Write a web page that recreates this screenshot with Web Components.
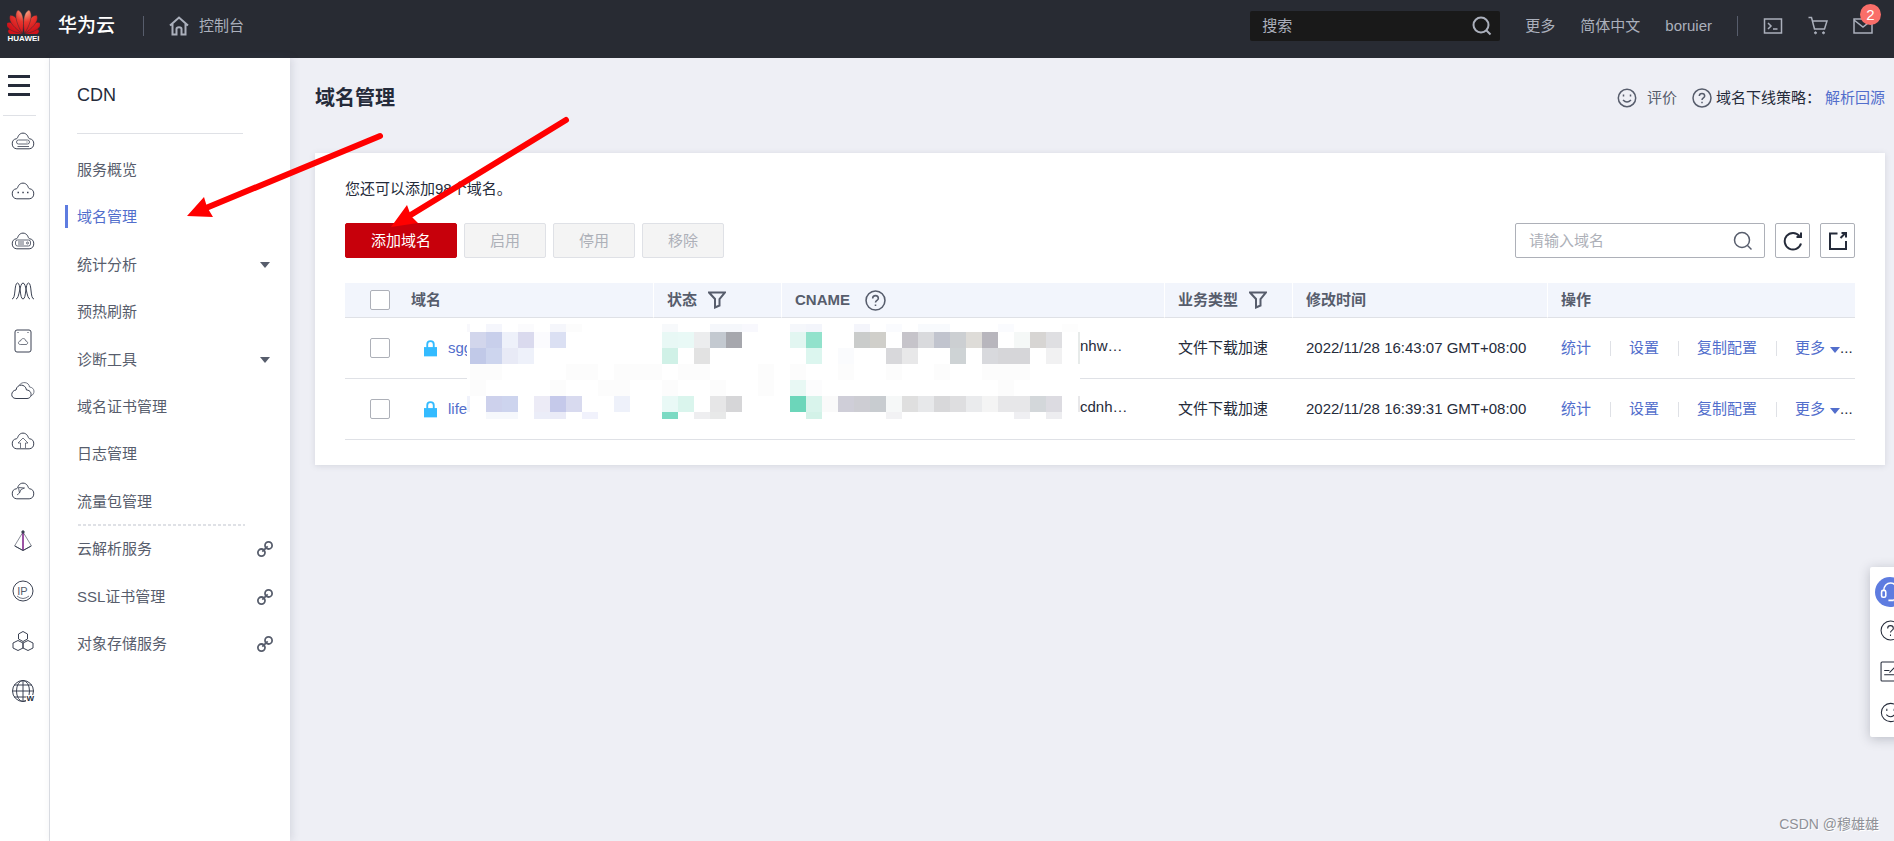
<!DOCTYPE html>
<html lang="zh-CN">
<head>
<meta charset="utf-8">
<title>域名管理 - CDN</title>
<style>
  body {
    margin: 0;
    font: 15px/24px "Liberation Sans", "Noto Sans CJK SC", sans-serif;
    color: #252b3a;
    background: #eeeff5;
    --text-secondary: #575d6c;
    --link: #526ecc;
    --brand: #5e7ce0;
    --line: #dfe1e6;
  }
</style>
</head>
<body>
<console-app></console-app>

<script>
const CLOUD = '<path d="M5.800 17.800A5.100 5.100 0 0 1 5.500 7.700C6.500 7.500 6.700 6 7.500 4.700A5.200 5.200 0 0 1 16.500 4.700C17.300 6 17.500 7.500 18.500 7.700A5.100 5.100 0 0 1 18.200 17.800Z"/>';

// name: [viewBox, inner svg]
const ICONS = {
  home: ['0 0 20 20', '<path d="M1 9.500L10 1.500L19 9.500M3.500 8V18.500H7.500V13C7.500 10.500 12.500 10.500 12.500 13V18.500H16.500V8" stroke-width="2"/>'],
  search: ['0 0 20 20', '<circle cx="9" cy="9" r="7.500"/><path d="M14.500 14.500L18.500 18.500"/>'],
  terminal: ['0 0 20 20', '<path d="M1.500 3H18.500V17H1.500ZM5 7L8 10L5 13M10 13H14.500"/>'],
  cart: ['0 0 20 20', '<path d="M.500 1.500H3.500L6.500 13H16.500L19 5H5"/><circle cx="7.500" cy="16.800" r="1" fill="currentColor" stroke-width="1"/><circle cx="15.500" cy="16.800" r="1" fill="currentColor" stroke-width="1"/>'],
  mail: ['0 0 20 20', '<path d="M1 3H19V17H1ZM1 4L10 11L19 4"/>'],
  smile: ['0 0 20 20', '<circle cx="10" cy="10" r="8.700"/><path d="M6 12Q10 16 14 12"/><path d="M6.500 6.500V8.500M13.500 6.500V8.500"/>'],
  help: ['0 0 20 20', '<circle cx="10" cy="10" r="9"/><path d="M7.300 8C7.300 4.500 12.700 4.500 12.700 8C12.700 10 10 9.800 10 12M10 13.700V15.200"/>'],
  filter: ['0 0 18 18', '<path d="M1 1.500H17L11.500 8V14.500L7 16.500V8Z"/>'],
  lock: ['0 0 14 18', '<path d="M3.500 9V5C3.500.500 10.500.500 10.500 5V9" stroke-width="2"/><path d="M0 8H14V18H0Z" fill="currentColor" stroke="none"/>'],
  refresh: ['0 0 20 20', '<path d="M18 12.500A8.300 8.300 0 1 1 16.500 5M18 1.500V6H13.500" stroke-width="2"/>'],
  export: ['0 0 20 20', '<path d="M9.500 2.500H2V18H18V10M12.500 7L17.500 2M13.500 2H18V6.500" stroke-width="2"/>'],
  link: ['0 0 18 18', '<circle cx="5" cy="13" r="4"/><circle cx="13" cy="5" r="4"/><path d="M6 12L12 6"/>'],
  caret: ['0 0 10 6', '<path d="M0 0H10L5 6Z" fill="currentColor" stroke="none"/>'],
  headset: ['0 0 20 20', '<path d="M3.500 8.500C3.500-1.500 16.500-1.500 16.500 8.500M16.500 14Q16 16.500 13 17M8 17.500H13"/><rect x="1.500" y="8" width="4" height="6.500" rx="1.500"/><rect x="14.500" y="8" width="4" height="6.500" rx="1.500"/>'],
  note: ['0 0 20 20', '<rect x="1" y="1" width="18" height="18" rx="1"/><path d="M4 9H9M4 13H14M9 11L14 6"/>'],
  'cloud-server': ['0 0 24 20', CLOUD + '<g opacity=".8"><rect x="5.500" y="9" width="13" height="4" rx="2"/><path d="M6.500 15.500H18M15.500 11H16.500"/></g>'],
  'cloud-dots': ['0 0 24 20', CLOUD + '<path d="M6.500 11.500H8M11.300 11.500H12.800M16 11.500H17.500" stroke-width="1.500"/>'],
  'cloud-box': ['0 0 24 20', CLOUD + '<g opacity=".8"><rect x="4.500" y="9" width="15" height="6" rx="2"/><path d="M7 11H13M7 13H13"/><circle cx="16.500" cy="12" r="1"/></g>'],
  waves: ['0 0 24 20', '<path d="M1 18C5 18 3 2 6.500 2S8.500 18 12 18S14 2 17.500 2S19 18 23 18M5 18C8.500 18 8.500 2 12 2S15.500 18 19 18"/>'],
  disk: ['0 0 18 24', '<rect x="1" y="1" width="16" height="22" rx="2"/><path d="M3.500 3.500H4.500M13.500 3.500H14.500"/><path d="M6.500 15.500C3.500 15.500 4 12 6.500 12C7.500 8.500 11.500 9 11.800 12C14.500 12.500 14 15.500 12 15.500Z" opacity=".7"/>'],
  clouds: ['0 0 24 20', '<path d="M5 17.500C-1 17.500-.300 9.500 5 9C6 2.500 14.500 2.500 15.500 9C21.500 9 21.500 17.500 16 17.500Z"/><path d="M8.500 4C10.500.500 18 .500 18.500 6C24 6.500 24.500 13 19.800 15" opacity=".7"/>'],
  'cloud-upload': ['0 0 24 20', CLOUD + '<path d="M9.500 17V12H7L12 7L17 12H14.500V17" opacity=".7"/>'],
  'cloud-flow': ['0 0 24 20', CLOUD + '<path d="M7.500 6.500L8.500 12L10 8.500L13.500 7L7.500 6.500M8.500 12L6 14" opacity=".8"/>'],
  prism: ['0 0 20 22', '<path d="M10 2L1.500 16L10 20.500L18.500 16Z" opacity=".6"/><path d="M10 2V20" stroke="#7b1a86" stroke-width="1.500"/><path d="M2 16L10 20.500L18 16"/><circle cx="10" cy="2" r="1.200" fill="currentColor"/>'],
  // the letters are laid over the ring by the rail
  ring: ['0 0 22 22', '<circle cx="11" cy="11" r="10"/><path d="M5 16Q11 21 17 16" opacity=".7"/>'],
  hexes: ['0 0 22 22', '<path d="M11 1.500L15.500 4V9L11 11.500L6.500 9V4ZM6 10.500L11 13V18L6 20.500L1 18V13ZM16 10.500L21 13V18L16 20.500L11 18V13Z"/>'],
  globe: ['0 0 24 24', '<circle cx="12" cy="12" r="10.500"/><ellipse cx="12" cy="12" rx="6.500" ry="10.500"/><path d="M12 1.500V22.500M1.500 12H22.500M3 6H21M3 18H15"/>']
};

class UiIcon extends HTMLElement {
  connectedCallback() {
    const [viewBox, body] = ICONS[this.getAttribute('name')];
    this.attachShadow({ mode: 'open' }).innerHTML = `
      <style>
        :host { display: inline-block; flex: none; width: 20px; height: 20px; }
        svg { display: block; width: 100%; height: 100%; fill: none; stroke: currentColor; stroke-width: var(--icon-stroke, 1.5); }
      </style>
      <svg viewBox="${viewBox}" aria-hidden="true">${body}</svg>
    `;
  }
}

class BrandLogo extends HTMLElement {
  connectedCallback() {
    const petals = [[-80, 15], [80, 15], [-57, 19], [57, 19], [-34, 22], [34, 22], [-11, 24], [11, 24]];
    this.attachShadow({ mode: 'open' }).innerHTML = `
      <style>
        :host { display: flex; flex-direction: column; align-items: center; color: #fff; }
        svg { display: block; width: 33px; height: 25px; }
        span { font-size: 8px; font-weight: bold; line-height: 9px; }
      </style>
      <svg viewBox="0 0 33 25" aria-hidden="true">
        <defs>
          <radialGradient id="red" gradientUnits="userSpaceOnUse" cx="18" cy="2" r="22">
            <stop offset="0" stop-color="#fbb08c"/>
            <stop offset=".5" stop-color="#e8362e"/>
            <stop offset="1" stop-color="#d0121a"/>
          </radialGradient>
        </defs>
        <mask id="fan">
          ${petals.map(([angle, len]) => `
            <path fill="#fff" stroke="#000" stroke-width=".4" transform="translate(${16.5 + Math.sign(angle)} 24.500) rotate(${angle})"
              d="M0 0C-3 -${len * .3} -6 -${len * .85} 0 -${len}C6 -${len * .85} 3 -${len * .3} 0 0"/>`).join('')}
        </mask>
        <rect width="33" height="25" fill="url(#red)" mask="url(#fan)"/>
      </svg>
      <span>HUAWEI</span>
    `;
  }
}

class TopBar extends HTMLElement {
  connectedCallback() {
    this.attachShadow({ mode: 'open' }).innerHTML = `
      <style>
        :host { display: block; background: #282b33; color: #abb0bc; }
        header { display: flex; align-items: center; height: 58px; padding: 0 21px 6px 7px; box-sizing: border-box; }
        a { display: flex; align-items: center; color: inherit; text-decoration: none; }
        .name { margin: 0 28px 0 18px; color: #fff; font-size: 19px; font-weight: 500; }
        i { width: 1px; height: 20px; background: #575d6c; }
        .home { gap: 10px; margin-left: 25px; }
        form { display: flex; align-items: center; width: 250px; height: 30px; margin-left: auto; margin-right: 25px; background: #191919; border-radius: 2px; }
        input { flex: 1; min-width: 0; padding: 0 12px; border: 0; background: none; color: inherit; font: inherit; outline: none; }
        input::placeholder { color: inherit; opacity: 1; }
        button { display: flex; padding: 0 8px; border: 0; background: none; color: inherit; }
        form ui-icon { --icon-stroke: 2; }
        nav { display: flex; align-items: center; gap: 25px; }
        .mail { position: relative; }
        .badge { position: absolute; left: 7px; top: -12px; width: 21px; height: 21px; border-radius: 50%; background: #fa6e69; color: #fff; line-height: 21px; text-align: center; }
      </style>
      <header>
        <brand-logo></brand-logo>
        <a class="name" href="#">华为云</a>
        <i></i>
        <a class="home" href="#"><ui-icon name="home"></ui-icon>控制台</a>
        <form>
          <input type="text" placeholder="搜索" aria-label="搜索">
          <button type="button" aria-label="搜索"><ui-icon name="search"></ui-icon></button>
        </form>
        <nav>
          <a href="#">更多</a>
          <a href="#">简体中文</a>
          <a href="#">boruier</a>
          <i></i>
          <a href="#" aria-label="命令行"><ui-icon name="terminal"></ui-icon></a>
          <a href="#" aria-label="购物车"><ui-icon name="cart"></ui-icon></a>
          <a class="mail" href="#" aria-label="消息"><ui-icon name="mail"></ui-icon><span class="badge">2</span></a>
        </nav>
      </header>
    `;
  }
}

class ServiceRail extends HTMLElement {
  connectedCallback() {
    const services = ['cloud-server', 'cloud-dots', 'cloud-box', 'waves', 'disk', 'clouds', 'cloud-upload', 'cloud-flow', 'prism', 'ring', 'hexes', 'globe'];
    this.attachShadow({ mode: 'open' }).innerHTML = `
      <style>
        :host { display: block; padding-top: 17px; border-right: 1px solid var(--line); background: #fff; }
        button { display: flex; flex-direction: column; gap: 6px; width: 22px; margin: 0 0 0 8px; padding: 0; border: 0; background: none; }
        button span { width: 100%; height: 3px; background: #252b3a; }
        hr { width: 33px; margin: 19px 0 0 3px; border: 0; border-top: 1px solid var(--line); }
        nav { display: flex; flex-direction: column; width: 45px; }
        a { position: relative; display: flex; align-items: center; justify-content: center; height: 50px; color: #3a4152; font-size: 11px; }
        ui-icon { width: 24px; height: 24px; --icon-stroke: 1; }
        ui-icon[name="prism"], ui-icon[name="ring"], ui-icon[name="hexes"] { width: 22px; height: 22px; }
        .tag { position: absolute; color: var(--text-secondary); }
        .corner { right: 11px; bottom: 13px; color: #252b3a; font-size: 8px; font-weight: bold; line-height: 8px; background: #fff; }
      </style>
      <button type="button" aria-label="服务列表"><span></span><span></span><span></span></button>
      <hr>
      <nav>
        ${services.map(name => `
          <a href="#" aria-label="${name}">
            <ui-icon name="${name}"></ui-icon>
            ${name === 'ring' ? '<span class="tag">IP</span>' : ''}
            ${name === 'globe' ? '<span class="tag corner">W</span>' : ''}
          </a>
        `).join('')}
      </nav>
    `;
  }
}

class SideMenu extends HTMLElement {
  connectedCallback() {
    const items = [
      { text: '服务概览' },
      { text: '域名管理', active: true },
      { text: '统计分析', icon: 'caret' },
      { text: '预热刷新' },
      { text: '诊断工具', icon: 'caret' },
      { text: '域名证书管理' },
      { text: '日志管理' },
      { text: '流量包管理', last: true },
      { text: '云解析服务', icon: 'link' },
      { text: 'SSL证书管理', icon: 'link' },
      { text: '对象存储服务', icon: 'link' }
    ];
    this.attachShadow({ mode: 'open' }).innerHTML = `
      <style>
        :host { display: block; position: relative; background: #fff; box-shadow: 2px 0 8px rgba(70, 76, 100, .15); }
        h2 { margin: 0 47px 0 27px; padding: 25px 0 26px; border-bottom: 1px solid var(--line); font-size: 18px; font-weight: normal; }
        ul { display: grid; grid-auto-rows: 1fr; min-height: 522px; margin: 12px 0 0; padding: 0; list-style: none; }
        li { display: flex; position: relative; }
        a { flex: 1; display: flex; align-items: center; justify-content: space-between; padding: 0 17px 0 27px; color: var(--text-secondary); text-decoration: none; }
        .active a { color: var(--link); }
        .active::before { content: ''; position: absolute; left: 15px; top: 12px; width: 3px; height: 23px; background: var(--brand); }
        .last::after { content: ''; position: absolute; left: 28px; right: 45px; bottom: 0; height: 2px; background: repeating-linear-gradient(90deg, var(--line) 0 3px, transparent 3px 5px); }
        ui-icon { width: 16px; height: 16px; --icon-stroke: 2; }
        ui-icon[name="caret"] { width: 10px; height: 6px; margin-right: 3px; }
      </style>
      <h2>CDN</h2>
      <ul>
        ${items.map(item => `
          <li class="${item.active ? 'active' : ''} ${item.last ? 'last' : ''}">
            <a href="#">${item.text}${item.icon ? `<ui-icon name="${item.icon}"></ui-icon>` : ''}</a>
          </li>
        `).join('')}
      </ul>
    `;
  }
}

class PageHeading extends HTMLElement {
  connectedCallback() {
    this.attachShadow({ mode: 'open' }).innerHTML = `
      <style>
        :host { display: flex; align-items: center; justify-content: space-between; }
        h1 { margin: 0; font-size: 20px; line-height: 30px; }
        div { display: flex; align-items: center; }
        a { display: flex; align-items: center; gap: 10px; color: var(--link); text-decoration: none; }
        .rate { margin-right: 15px; color: var(--text-secondary); }
        .help { margin-right: 4px; color: var(--text-secondary); }
        span { margin-right: 4px; }
      </style>
      <h1><slot></slot></h1>
      <div>
        <a class="rate" href="#"><ui-icon name="smile"></ui-icon>评价</a>
        <ui-icon class="help" name="help"></ui-icon>
        <span>域名下线策略：</span>
        <a href="#">解析回源</a>
      </div>
    `;
  }
}

class DomainToolbar extends HTMLElement {
  connectedCallback() {
    this.attachShadow({ mode: 'open' }).innerHTML = `
      <style>
        :host { display: flex; align-items: center; gap: 7px; }
        button { height: 35px; padding: 0 25px; border: 1px solid var(--line); border-radius: 2px; background: #f4f4f4; color: #adb0b8; font: inherit; }
        .primary { border-color: #c7000b; background: #c7000b; color: #fff; }
        form { display: flex; gap: 10px; margin-left: auto; }
        .field { display: flex; box-sizing: border-box; width: 250px; height: 35px; border: 1px solid #adb0b8; border-radius: 2px; background: #fff; }
        input { flex: 1; min-width: 0; padding: 0 0 0 13px; border: 0; background: none; font: inherit; outline: none; }
        input::placeholder { color: #adb0b8; opacity: 1; }
        .square, .field button { display: flex; align-items: center; justify-content: center; width: 35px; padding: 0; border-color: #adb0b8; background: #fff; color: #252b3a; }
        .field button { height: 33px; margin-right: 4px; border: 0; color: var(--text-secondary); }
      </style>
      <button type="button" class="primary">添加域名</button>
      <button type="button" disabled>启用</button>
      <button type="button" disabled>停用</button>
      <button type="button" disabled>移除</button>
      <form>
        <div class="field">
          <input type="text" placeholder="请输入域名" aria-label="请输入域名">
          <button type="button" aria-label="查询"><ui-icon name="search"></ui-icon></button>
        </div>
        <button type="button" class="square" aria-label="刷新"><ui-icon name="refresh"></ui-icon></button>
        <button type="button" class="square" aria-label="导出"><ui-icon name="export"></ui-icon></button>
      </form>
    `;
  }
}

// Blocks that cover the private part of the rows: [column, colour] on a 16px grid
const MASK_ROWS = [
  { y: 0, h: 8, cells: '-1 f8f8fc,1 f5f6fc,3 fbfbfd,5 f5f6fb,6 fcfcfc,12 f7f9fb,15 f5f7fb,16 f5f7fb,17 f8f8fd,20 f5f7fb,21 f3f5fb,24 f4f5fb,26 fafbfe,28 f8fafd,29 f8fafd,33 fafbfe,37 fdfdfd' },
  { y: 8, h: 16, cells: '0 d2d6ec,1 c8cfeb,2 eef1fa,3 dadaee,4 fbfbfe,5 dbe0f3,12 e8f8f5,13 e9f9f6,14 ecedee,15 c3c9d0,16 a6a7ad,20 e2f6f1,21 92e2cc,24 cacccb,25 d0cfca,27 c6c4ca,28 d9dadd,29 c1c4ce,30 cccfd2,31 dedcd8,32 b8b6bd,34 f5f8f7,35 d7d5d3,36 dfdfe2,38 e7ebea' },
  { y: 24, h: 16, cells: '0 c1c9e8,1 cdd5ee,2 e8eaf6,3 eef1fa,12 d0f1e7,14 e2e2e2,21 dcf6ef,23 fafbfd,26 d8d8db,27 e8e8e9,30 ced3d5,32 d8d9dd,33 d6d6d9,34 d6d6d9,36 f1f1f2,38 e7ebea' },
  { y: 40, h: 16, cells: '0 fcfcfc,1 fcfcfc,6 fcfcfc,7 fcfcfc,9 fcfcfc,10 fcfcfc,11 fcfcfc,13 fcfcfc,14 fcfcfc,18 fcfcfc,20 fcfcfc,23 fcfcfc,26 fcfcfc,29 fcfcfc,32 fcfcfc,33 fcfcfc,34 fcfcfc' },
  { y: 56, h: 16, cells: '0 fcfcfc,5 fcfcfc,8 fcfcfc,9 fcfcfc,12 fcfcfc,15 fcfcfc,18 fcfcfc,20 e8f8f4,21 fcfcfd,33 fcfcfc' },
  { y: 72, h: 16, cells: '-1 f0f2fb,1 cdd1ec,2 cdd4ee,4 ecebf6,5 c5c9ea,6 d8daef,9 eef1fa,12 e9f9f6,13 daf5ed,15 e6e6e7,16 d6d6d8,20 6cd6ba,21 d9f4ec,22 fafafa,23 cfced8,24 cdcdd3,25 c8ccd0,26 f6f8f8,27 dfdfdf,28 e7e8ea,29 d8d8da,30 dedee0,31 eaebed,32 f4f4f4,33 e7e7e9,34 e7e7e9,35 d3d7da,36 dcdbe1,38 e8e8ea' },
  { y: 88, h: 7, cells: '1 f6f8fc,2 f6f8fc,4 ebedf8,5 eaebf7,7 f1f2fc,12 7bdac3,14 eeeef0,15 e8e9e9,21 d3f2e8,26 f2f2f4,34 efeff2,36 ededf0' }
];

class PrivacyMask extends HTMLElement {
  connectedCallback() {
    const rects = MASK_ROWS.map(row => row.cells.split(',').map(cell => {
      const [col, color] = cell.split(' ');
      return `<rect x="${3 + col * 16}" y="${row.y}" width="16" height="${row.h}" fill="#${color}"/>`;
    }).join('')).join('');
    this.attachShadow({ mode: 'open' }).innerHTML = `
      <style>
        :host { display: block; background: #fff; }
        svg { display: block; shape-rendering: crispEdges; }
      </style>
      <svg width="613" height="95" aria-hidden="true">${rects}</svg>
    `;
  }
}

class DomainTable extends HTMLElement {
  connectedCallback() {
    const rows = [
      { name: 'sgg', cname: 'nhw…', type: '文件下载加速', time: '2022/11/28 16:43:07 GMT+08:00' },
      { name: 'life', cname: 'cdnh…', type: '文件下载加速', time: '2022/11/28 16:39:31 GMT+08:00' }
    ];
    this.attachShadow({ mode: 'open' }).innerHTML = `
      <style>
        :host { display: block; position: relative; }
        table { width: 100%; table-layout: fixed; border-collapse: separate; border-spacing: 0; }
        th, td { box-sizing: border-box; padding: 0 0 0 13px; border-bottom: 1px solid var(--line); text-align: left; white-space: nowrap; overflow: hidden; }
        th { height: 35px; border-right: 1px solid #fff; background: #f2f5fc; color: var(--text-secondary); }
        th:first-child, th:last-child { border-right: 0; }
        td { height: 61px; }
        th:first-child, td:first-child { padding-left: 25px; }
        input { appearance: none; display: block; width: 20px; height: 20px; margin: 0; border: 1px solid #adb0b8; border-radius: 2px; background: #fff; }
        div { display: flex; align-items: center; }
        a { color: var(--link); text-decoration: none; }
        .head { gap: 11px; }
        .head ui-icon { width: 18px; height: 18px; --icon-stroke: 2; }
        .head ui-icon[name="help"] { width: 21px; height: 21px; margin-left: 4px; --icon-stroke: 1.5; }
        .name { gap: 11px; padding-left: 13px; }
        .name ui-icon { width: 13px; height: 18px; color: #33bbff; }
        .cname { padding: 0 0 4px 285px; }
        .actions i { flex: none; width: 1px; height: 15px; margin: 0 18px 0 19px; background: var(--line); }
        .actions ui-icon { width: 10px; height: 6px; margin: 4px 0 0 5px; color: var(--link); }
        privacy-mask { position: absolute; left: 122px; top: 41px; }
      </style>
      <table>
        <colgroup>
          <col style="width:53px"><col style="width:256px"><col style="width:128px"><col><col style="width:128px"><col style="width:255px"><col style="width:307px">
        </colgroup>
        <thead>
          <tr>
            <th><input type="checkbox" aria-label="全选"></th>
            <th>域名</th>
            <th><div class="head">状态<ui-icon name="filter"></ui-icon></div></th>
            <th><div class="head">CNAME<ui-icon name="help"></ui-icon></div></th>
            <th><div class="head">业务类型<ui-icon name="filter"></ui-icon></div></th>
            <th>修改时间</th>
            <th>操作</th>
          </tr>
        </thead>
        <tbody>
          ${rows.map(row => `
            <tr>
              <td><input type="checkbox" aria-label="选择"></td>
              <td><div class="name"><ui-icon name="lock"></ui-icon><a href="#">${row.name}</a></div></td>
              <td></td>
              <td><div class="cname">${row.cname}</div></td>
              <td>${row.type}</td>
              <td>${row.time}</td>
              <td>
                <div class="actions">
                  <a href="#">统计</a><i></i><a href="#">设置</a><i></i><a href="#">复制配置</a><i></i><a href="#">更多</a><ui-icon name="caret"></ui-icon>...
                </div>
              </td>
            </tr>
          `).join('')}
        </tbody>
      </table>
      <privacy-mask></privacy-mask>
    `;
  }
}

class ContentCard extends HTMLElement {
  connectedCallback() {
    this.attachShadow({ mode: 'open' }).innerHTML = `
      <style>
        :host { display: block; padding: 24px 30px 25px; background: #fff; box-shadow: 0 1px 6px rgba(70, 76, 100, .15); }
      </style>
      <slot></slot>
    `;
  }
}

class HelpDock extends HTMLElement {
  connectedCallback() {
    this.attachShadow({ mode: 'open' }).innerHTML = `
      <style>
        :host { display: flex; flex-direction: column; align-items: center; gap: 13px; box-sizing: border-box; width: 40px; height: 170px; padding-top: 10px; border-radius: 2px; background: #fff; box-shadow: 0 2px 12px rgba(37, 43, 58, .25); }
        button { display: flex; align-items: center; justify-content: center; height: 28px; padding: 0; border: 0; background: none; color: #252b3a; }
        ui-icon { width: 21px; height: 21px; --icon-stroke: 1; }
        .service { flex: none; width: 30px; height: 30px; margin-bottom: -4px; border-radius: 50%; background: var(--brand); color: #fff; }
        .service ui-icon { --icon-stroke: 1.5; }
      </style>
      <button type="button" class="service" aria-label="在线客服"><ui-icon name="headset"></ui-icon></button>
      <button type="button" aria-label="帮助"><ui-icon name="help"></ui-icon></button>
      <button type="button" aria-label="建议"><ui-icon name="note"></ui-icon></button>
      <button type="button" aria-label="评价"><ui-icon name="smile"></ui-icon></button>
    `;
  }
}

class GuideArrows extends HTMLElement {
  connectedCallback() {
    this.attachShadow({ mode: 'open' }).innerHTML = `
      <style>
        :host { display: block; pointer-events: none; }
        svg { display: block; }
      </style>
      <svg width="400" height="140" aria-hidden="true" stroke="#f00" fill="#f00" stroke-linecap="round">
        <path d="M200 36L26 108M386 20L229 116" stroke-width="6" fill="none"/>
        <path d="M7 116L24 97L27 107L33 117ZM211 127L227 105L231 116L238 123Z" stroke="none"/>
      </svg>
    `;
  }
}

class ConsoleApp extends HTMLElement {
  connectedCallback() {
    this.attachShadow({ mode: 'open' }).innerHTML = `
      <style>
        :host { display: grid; grid-template: auto 1fr / 50px 240px minmax(0, 1fr); position: relative; min-height: 100vh; overflow: hidden; }
        top-bar { grid-column: 1 / -1; }
        main { padding: 25px 9px 0 25px; }
        content-card { margin-top: 40px; }
        p { margin: 0 0 22px; }
        domain-toolbar { margin-bottom: 25px; }
        help-dock { position: absolute; right: -16px; top: 567px; }
        guide-arrows { position: absolute; left: 180px; top: 100px; }
        footer { position: absolute; right: 15px; bottom: 5px; color: #8f9197; font-size: 14px; text-shadow: 1px 1px #fff; }
      </style>
      <top-bar></top-bar>
      <service-rail></service-rail>
      <side-menu></side-menu>
      <main>
        <page-heading>域名管理</page-heading>
        <content-card>
          <p>您还可以添加98个域名。</p>
          <domain-toolbar></domain-toolbar>
          <domain-table></domain-table>
        </content-card>
      </main>
      <guide-arrows></guide-arrows>
      <help-dock></help-dock>
      <footer>CSDN @穆雄雄</footer>
    `;
  }
}

customElements.define('ui-icon', UiIcon);
customElements.define('brand-logo', BrandLogo);
customElements.define('top-bar', TopBar);
customElements.define('service-rail', ServiceRail);
customElements.define('side-menu', SideMenu);
customElements.define('page-heading', PageHeading);
customElements.define('domain-toolbar', DomainToolbar);
customElements.define('privacy-mask', PrivacyMask);
customElements.define('domain-table', DomainTable);
customElements.define('content-card', ContentCard);
customElements.define('help-dock', HelpDock);
customElements.define('guide-arrows', GuideArrows);
customElements.define('console-app', ConsoleApp);
</script>
</body>
</html>
